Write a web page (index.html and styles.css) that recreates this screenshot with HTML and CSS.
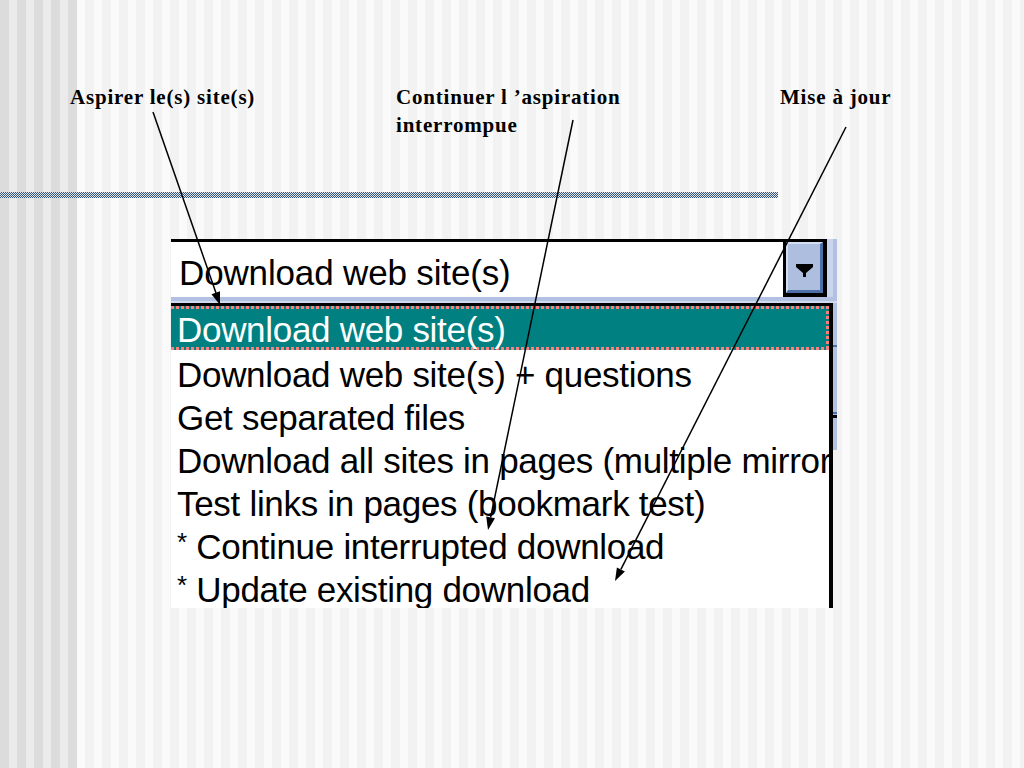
FILE: index.html
```html
<!DOCTYPE html>
<html lang="fr">
<head>
<meta charset="utf-8">
<title>Aspirer le(s) site(s)</title>
<link rel="stylesheet" href="styles.css">
</head>
<body>
<div class="page">
  <div class="labels">
    <div class="label label-a">Aspirer le(s) site(s)</div>
    <div class="label label-b">Continuer l ’aspiration<br>interrompue</div>
    <div class="label label-c">Mise à jour</div>
  </div>
  <div class="rule"></div>
  <div class="combo">
    <div class="edit">
      <div class="field">Download web site(s)</div>
      <div class="btn">
        <div class="btn-face">
          <svg class="arrow-glyph" width="17" height="13" viewBox="0 0 17 13"><polygon points="0,0 17,0 17,3 10,9 10,13 7,13 7,9 0,3" fill="#000"/></svg>
        </div>
      </div>
    </div>
    <div class="strip"></div>
    <div class="list">
      <div class="row row-sel">Download web site(s)</div>
      <div class="row">Download web site(s) + questions</div>
      <div class="row">Get separated files</div>
      <div class="row">Download all sites in pages (multiple mirror)</div>
      <div class="row">Test links in pages (bookmark test)</div>
      <div class="row"><span class="star">*</span> Continue interrupted download</div>
      <div class="row"><span class="star">*</span> Update existing download</div>
    </div>
  </div>
  <svg class="arrows" width="1024" height="768" viewBox="0 0 1024 768">
    <g stroke="#000" stroke-width="1.5" fill="none">
      <line x1="153" y1="112" x2="216" y2="293"/>
      <line x1="573" y1="120" x2="490.6" y2="517.3"/>
      <line x1="846" y1="127" x2="620.9" y2="569.4"/>
    </g>
    <g fill="#000">
      <polygon points="220,305 211.5,294.2 220,291.2"/>
      <polygon points="488,530 486.2,516.4 495,518.2"/>
      <polygon points="615,581 616.9,567.4 624.9,571.4"/>
    </g>
  </svg>
</div>
</body>
</html>
```
FILE: styles.css
```css
html, body {
  margin: 0;
  padding: 0;
}
body {
  width: 1024px;
  height: 768px;
  overflow: hidden;
  background:
    repeating-linear-gradient(90deg, #dcdcdc 0 9px, #ebebeb 9px 17px) left top / 77px 100% no-repeat,
    repeating-linear-gradient(90deg, #f2f2f2 0 9px, #fafafa 9px 17px);
}
.page {
  position: relative;
  width: 1024px;
  height: 768px;
}
.labels {
  display: flex;
  padding: 83px 0 0 70px;
  height: 56px;
}
.label {
  font-family: "Liberation Serif", "Times New Roman", serif;
  font-weight: bold;
  font-size: 21px;
  line-height: 28px;
  letter-spacing: 0.8px;
  color: #000;
  white-space: nowrap;
}
.label-a { width: 326px; }
.label-b { width: 384px; }
.rule {
  margin-top: 53px;
  width: 778px;
  height: 6px;
  background: repeating-conic-gradient(#2f5483 0 25%, #e8e8e8 0 50%) 0 0 / 2px 2px;
}
.combo {
  margin: 41px 0 0 171px;
  width: 666px;
  background:
    linear-gradient(#4b6fa6, #4b6fa6) right 0 top 106px / 4px 2px no-repeat,
    linear-gradient(#4b6fa6, #4b6fa6) right 0 top 173px / 4px 2px no-repeat,
    linear-gradient(#000, #000) right 0 top 176px / 4px 3px no-repeat,
    linear-gradient(90deg, #c9d5ed 0 6px, #b2c1e1 6px 10px) right top / 10px 211px no-repeat;
}
.edit {
  display: flex;
  width: 656px;
  height: 58px;
}
.field {
  flex: 1;
  box-sizing: border-box;
  height: 58px;
  border-top: 3px solid #000;
  background: #fff;
  padding-left: 8px;
  font-family: "Liberation Sans", Arial, sans-serif;
  font-size: 35px;
  line-height: 61px;
  letter-spacing: -0.15px;
  color: #000;
  white-space: nowrap;
  overflow: hidden;
}
.btn {
  width: 44px;
  height: 58px;
  box-sizing: border-box;
  background: #000;
  padding: 3px 4px 4px 3px;
}
.btn-face {
  box-sizing: border-box;
  height: 100%;
  background: #adbedf;
  border-style: solid;
  border-width: 2px 3px 3px 2px;
  border-color: #d3def2 #4b6fa6 #4b6fa6 #d3def2;
  display: flex;
  align-items: center;
  justify-content: center;
  padding-top: 6px;
}
.arrow-glyph {
  display: block;
  margin-left: 1px;
}
.strip {
  height: 6px;
  background: linear-gradient(#b2c1e1 0 4px, #cfdaee 4px 6px);
}
.list {
  width: 662px;
  box-sizing: border-box;
  border-top: 3px solid #000;
  border-right: 4px solid #000;
  background: #fff;
  overflow: hidden;
}
.row {
  height: 43px;
  padding-left: 6px;
  font-family: "Liberation Sans", Arial, sans-serif;
  font-size: 35px;
  line-height: 49px;
  letter-spacing: -0.3px;
  color: #000;
  white-space: nowrap;
}
.row-sel {
  height: 44px;
  box-sizing: border-box;
  color: #fff;
  background:
    repeating-linear-gradient(90deg, #ff7f7f 0 3px, transparent 3px 5px) left top / 100% 3px no-repeat,
    repeating-linear-gradient(90deg, #ff7f7f 0 3px, transparent 3px 5px) left bottom / 100% 3px no-repeat,
    repeating-linear-gradient(180deg, #ff7f7f 0 3px, transparent 3px 5px) right top / 3px 100% no-repeat,
    #008080;
  line-height: 48px;
}
.star {
  position: relative;
  top: -8px;
  font-size: 26px;
}
.arrows {
  position: absolute;
  left: 0;
  top: 0;
  pointer-events: none;
}
```
